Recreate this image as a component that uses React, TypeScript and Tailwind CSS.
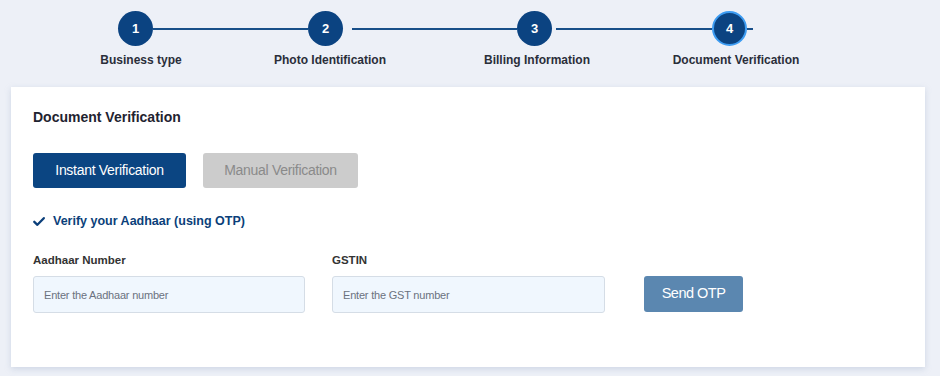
import React from 'react';

const steps = [
    { n: 1, label: 'Business type' },
    { n: 2, label: 'Photo Identification' },
    { n: 3, label: 'Billing Information' },
    { n: 4, label: 'Document Verification', active: true },
];

const Circle: React.FC<{ n: number; active?: boolean }> = ({ n, active }) => (
    <div
        className={`w-[35px] h-[35px] rounded-full bg-[#0b4381] text-white text-[13px] font-bold flex items-center justify-center shrink-0 ${
            active ? 'border-2 border-[#3d9cf2]' : ''
        }`}
    >
        {n}
    </div>
);

const Line: React.FC<{ w: string }> = ({ w }) => <div className={`h-[2px] bg-[#184f89] ${w}`}></div>;

const CheckIcon = () => (
    <svg width="12" height="11" viewBox="0 0 12 11" className="shrink-0">
        <path d="M1.3 5.8 L4.4 8.8 L10.8 2.2" fill="none" stroke="#0b3f7a" strokeWidth="2.3" strokeLinecap="round" strokeLinejoin="round" />
    </svg>
);

const App: React.FC = () => {
    return (
        <div className="min-h-[376px] bg-[#edf0f7] font-['Liberation_Sans',Arial,sans-serif] overflow-hidden">
            {/* stepper */}
            <div className="pt-[11px] pl-[118px] flex items-center">
                <Circle n={1} />
                <Line w="w-[155px]" />
                <Circle n={2} />
                <div className="ml-[9px]"><Line w="w-[165px]" /></div>
                <Circle n={3} />
                <div className="ml-[4px]"><Line w="w-[156px]" /></div>
                <Circle n={steps[3].n} active />
                <Line w="w-[6px]" />
            </div>
            <div className="mt-[6px] flex text-[12px] leading-[16px] font-bold text-[#2a2e3a]">
                <div className="w-[160px] ml-[61px] text-center">{steps[0].label}</div>
                <div className="w-[160px] ml-[29px] text-center">{steps[1].label}</div>
                <div className="w-[160px] ml-[47px] text-center">{steps[2].label}</div>
                <div className="w-[160px] ml-[39px] text-center">{steps[3].label}</div>
            </div>

            {/* card */}
            <div className="mt-[19px] ml-[11px] w-[914px] h-[280px] bg-white shadow-[0_2px_6px_rgba(150,165,195,0.35)] pl-[22px] pt-[20px]">
                <h2 className="text-[14px] leading-[20px] font-bold text-[#1f2330]">Document Verification</h2>

                <div className="mt-[26px] flex gap-[17px]">
                    <button className="w-[153px] h-[35px] rounded-[3px] bg-[#0b4582] text-white text-[14px] tracking-[-0.3px]">
                        Instant Verification
                    </button>
                    <button className="w-[155px] h-[35px] rounded-[3px] bg-[#cccccc] text-[#8a8a8a] text-[14px] tracking-[-0.3px]">
                        Manual Verification
                    </button>
                </div>

                <div className="mt-[25px] flex items-center gap-[8px] text-[12.5px] leading-[16px] font-bold text-[#0b3f7a]">
                    <CheckIcon />
                    <span>Verify your Aadhaar (using OTP)</span>
                </div>

                <div className="mt-[23px] flex items-end">
                    <div className="w-[272px]">
                        <label className="block text-[11.5px] leading-[16px] font-bold text-[#333]">Aadhaar Number</label>
                        <input
                            placeholder="Enter the Aadhaar number"
                            className="mt-[8px] w-full h-[37px] rounded-[3px] bg-[#f0f7fe] border border-[#d5dde6] px-[10px] text-[11px] tracking-[-0.2px] placeholder:text-[#6b7280] outline-none"
                        />
                    </div>
                    <div className="w-[273px] ml-[27px]">
                        <label className="block text-[11.5px] leading-[16px] font-bold text-[#333]">GSTIN</label>
                        <input
                            placeholder="Enter the GST number"
                            className="mt-[8px] w-full h-[37px] rounded-[3px] bg-[#f0f7fe] border border-[#d5dde6] px-[10px] text-[11px] tracking-[-0.2px] placeholder:text-[#6b7280] outline-none"
                        />
                    </div>
                    <button className="ml-[39px] mb-[1px] w-[99px] h-[36px] rounded-[3px] bg-[#5b87b0] text-white text-[14.5px] tracking-[-0.5px]">
                        Send OTP
                    </button>
                </div>
            </div>
        </div>
    );
};

export default App;
